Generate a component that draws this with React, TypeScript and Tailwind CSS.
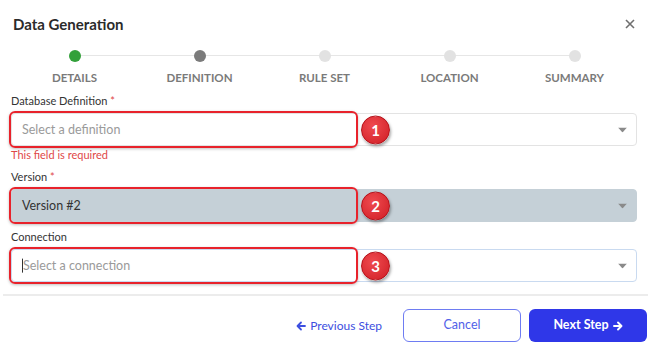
import React from "react";

const font = { fontFamily: 'Lato, "Open Sans", Arial, sans-serif' };

function Caret() {
  return (
    <svg width="9" height="5" viewBox="0 0 9 5" className="absolute right-[9px] top-1/2 -translate-y-1/2">
      <path d="M0 0 L9 0 L4.5 5 Z" fill="#8a8a8a" />
    </svg>
  );
}

function Badge({ n }: { n: number }) {
  return (
    <div className="absolute left-[349px] top-1/2 -translate-y-1/2 w-[29px] h-[29px] rounded-full bg-[radial-gradient(circle_at_40%_35%,#ef4a4f,#cf1d24)] border-[1.5px] border-[#b5121a] shadow-[1px_2px_3px_rgba(0,0,0,0.35)] flex items-center justify-center text-white text-[15px] font-bold">
      {n}
    </div>
  );
}

function Field({
  label,
  required,
  placeholder,
  value,
  variant,
  n,
}: {
  label: string;
  required?: boolean;
  placeholder?: string;
  value?: string;
  variant: "plain" | "disabled" | "focus";
  n: number;
}) {
  const box =
    variant === "disabled"
      ? "bg-[#c5d0d7] border-[#c5d0d7]"
      : variant === "focus"
      ? "bg-white border-[#c9daf0]"
      : "bg-white border-[#e3e3e3]";
  return (
    <div>
      <div className="text-[11px] leading-[16px] text-[#333] h-[16px]">
        {label}
        {required && <span className="text-[#e04848]"> *</span>}
      </div>
      <div className={`relative mt-[4px] h-[33px] rounded-[4px] border ${box}`}>
        <div className="absolute left-[10px] top-1/2 -translate-y-1/2 text-[12.5px] flex items-center">
          {variant === "focus" && <span className="w-px h-[14px] bg-[#333]" />}
          {value ? (
            <span className="text-[#333]">{value}</span>
          ) : (
            <span className="text-[#9a9a9a]">{placeholder}</span>
          )}
        </div>
        <Caret />
        <div className="absolute -left-[3px] -top-[3px] w-[349px] h-[37px] rounded-[6px] border-2 border-[#e8222b] shadow-[0_1px_3px_rgba(0,0,0,0.25)]" />
        <Badge n={n} />
      </div>
    </div>
  );
}

export default function App() {
  const steps = [
    { label: "DETAILS", color: "bg-[#33a03a]" },
    { label: "DEFINITION", color: "bg-[#7b7b7b]" },
    { label: "RULE SET", color: "bg-[#e2e2e2]" },
    { label: "LOCATION", color: "bg-[#e2e2e2]" },
    { label: "SUMMARY", color: "bg-[#e2e2e2]" },
  ];
  return (
    <div className="w-[659px] h-[350px] bg-white relative overflow-hidden" style={font}>
      <div className="flex items-center justify-between pl-[13px] pr-[24px] pt-[13px] h-[35px]">
        <div className="text-[15px] font-bold text-[#2b2b2b] leading-[20px]">Data Generation</div>
        <svg width="10" height="10" viewBox="0 0 10 10">
          <path d="M1 1 L9 9 M9 1 L1 9" stroke="#6f6f6f" strokeWidth="1.6" />
        </svg>
      </div>

      <div className="relative w-[625px] ml-[12px] mt-[15px]">
        <div className="absolute left-[63px] right-[62px] top-[5px] h-px bg-[#e6e6e6]" />
        <div className="grid grid-cols-5">
          {steps.map((s) => (
            <div key={s.label} className="flex flex-col items-center">
              <div className={`relative w-[12px] h-[12px] rounded-full ${s.color}`} />
              <div className="mt-[9px] text-[11.5px] leading-[14px] font-bold text-[#7a7a7a]">
                {s.label}
              </div>
            </div>
          ))}
        </div>
      </div>

      <div className="px-[11px] mt-[8px] w-[648px]">
        <Field label="Database Definition" required placeholder="Select a definition" variant="plain" n={1} />
        <div className="text-[11px] leading-[14px] text-[#e04848] mt-[2px]">This field is required</div>
        <div className="mt-[7px]">
          <Field label="Version" required value="Version #2" variant="disabled" n={2} />
        </div>
        <div className="mt-[7px]">
          <Field label="Connection" placeholder="Select a connection" variant="focus" n={3} />
        </div>
      </div>

      <div className="ml-[3px] w-[645px] h-[2px] bg-[#ececec] mt-[12px]" />

      <div className="flex items-center justify-end pr-[12px] mt-[13px] gap-[8px]">
        <button className="text-[12px] text-[#3d4fe0] mr-[13px] flex items-center gap-[4px]">
          <svg width="10" height="10" viewBox="0 0 10 10">
            <path d="M9 5 H2 M5 1.5 L1.5 5 L5 8.5" stroke="#3d4fe0" strokeWidth="1.8" fill="none" strokeLinecap="round" strokeLinejoin="round" />
          </svg>
          <span>Previous Step</span>
        </button>
        <button className="w-[118px] h-[33px] rounded-[6px] border-[1.5px] border-[#6e7cf2] text-[12.5px] text-[#5161e8] bg-white">
          Cancel
        </button>
        <button className="w-[118px] h-[33px] rounded-[6px] bg-[#2f37e8] text-[12.5px] font-bold text-white flex items-center justify-center gap-[4px]">
          <span>Next Step</span>
          <svg width="10" height="10" viewBox="0 0 10 10">
            <path d="M1 5 H8 M5 1.5 L8.5 5 L5 8.5" stroke="white" strokeWidth="1.9" fill="none" strokeLinecap="round" strokeLinejoin="round" />
          </svg>
        </button>
      </div>
    </div>
  );
}
